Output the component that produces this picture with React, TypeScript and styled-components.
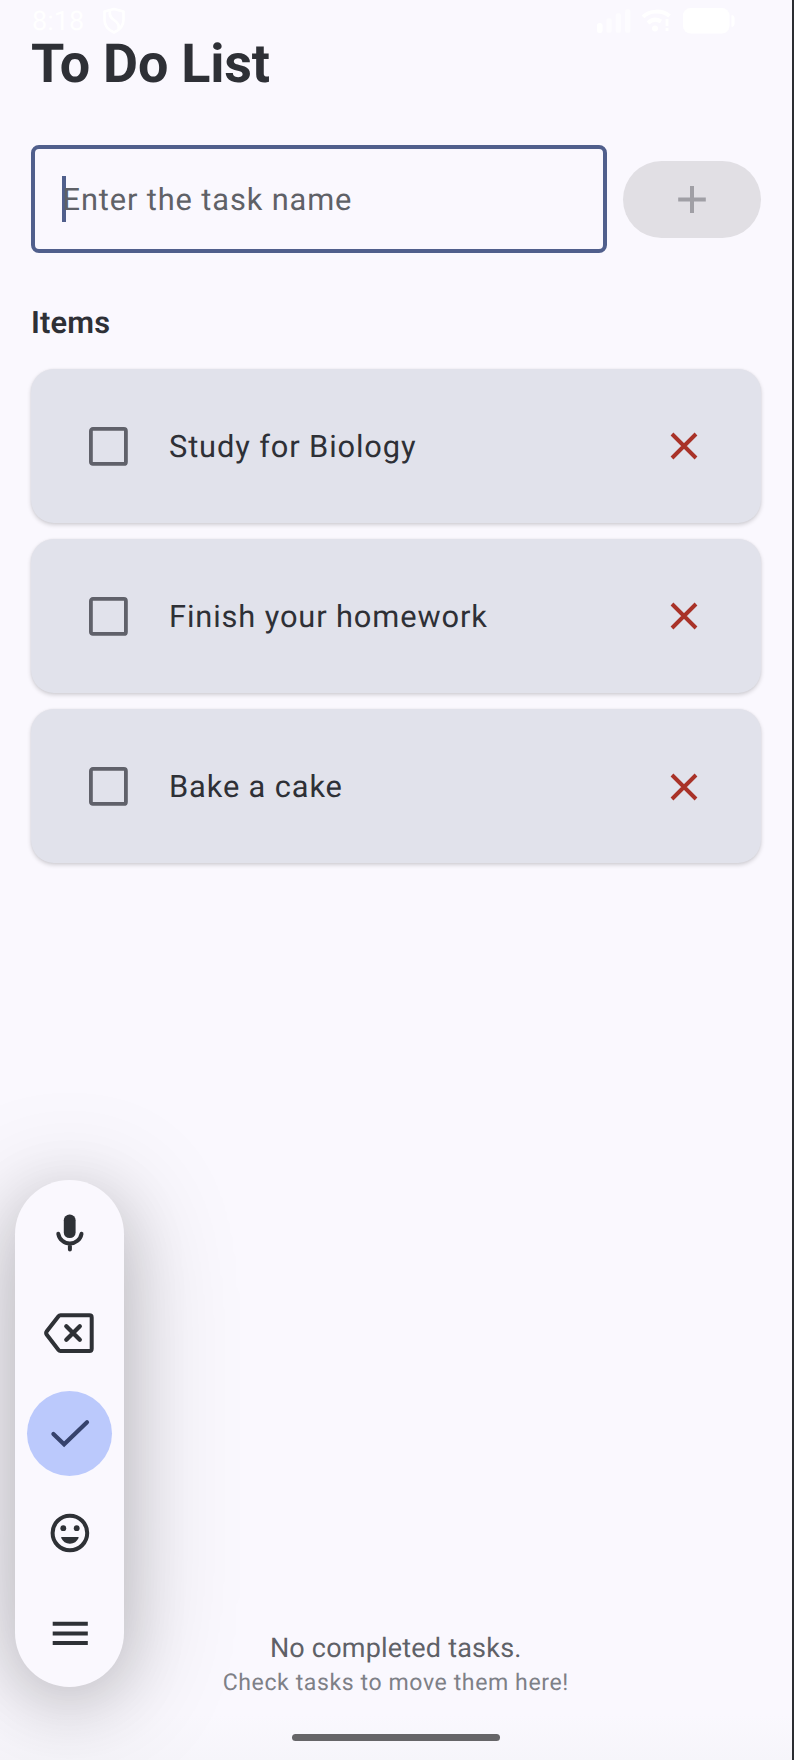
import React from "react";
import styled, { createGlobalStyle } from "styled-components";

const GlobalStyle = createGlobalStyle`
  *, *::before, *::after { box-sizing: border-box; }
  body { margin: 0; background: #faf8fe; text-rendering: geometricPrecision; }
`;

const Screen = styled.main`
  position: relative;
  display: flex;
  flex-direction: column;
  width: 794px;
  height: 1760px;
  padding: 37px 31px 0 30.5px;
  border-right: 2px solid #2b2d32;
  overflow: hidden;
  background: linear-gradient(to bottom, #faf8fe 1715px, #f6f5fa 1760px);
  color: #2e3036;
  font-family: Roboto, "Liberation Sans", sans-serif;
`;

const StatusBar = styled.div`
  position: absolute;
  inset: 0 2px auto 0;
  display: flex;
  justify-content: space-between;
  align-items: center;
  height: 41px;
  padding: 0 55px 0 32px;
  color: #fff;
`;

const StatusGroup = styled.div<{ $gap: number }>`
  display: flex;
  align-items: center;
  gap: ${(p) => p.$gap}px;
`;

const Clock = styled.span`
  font-size: 27px;
  line-height: 28px;
`;

const Title = styled.h1`
  margin: 0;
  padding-left: 0.5px;
  font-size: 53.9px;
  line-height: 56px;
  font-weight: 700;
  letter-spacing: -0.2px;
`;

const EntryRow = styled.form`
  display: flex;
  align-items: center;
  gap: 15.5px;
  margin-top: 52px;
  height: 108px;
`;

const Field = styled.div`
  display: flex;
  align-items: center;
  width: 576.5px;
  height: 108px;
  padding-left: 27px;
  border: 4px solid #505f8c;
  border-radius: 8px;
`;

const Caret = styled.span`
  width: 4px;
  height: 46px;
  margin-right: -3px;
  background: #505f8c;
`;

const Placeholder = styled.span`
  padding-top: 1px;
  font-size: 30.8px;
  line-height: 46px;
  letter-spacing: 0.88px;
  color: #5f6167;
`;

const AddButton = styled.button`
  display: grid;
  place-items: center;
  width: 138.5px;
  height: 77px;
  padding: 0;
  border: 0;
  border-radius: 39px;
  background: #e1dfe4;
  color: #a09fa5;
`;

const SectionTitle = styled.h2`
  margin: 47px 0 0;
  padding-left: 0.5px;
  font-size: 30.8px;
  line-height: 46px;
  font-weight: 600;
  letter-spacing: 0.2px;
`;

const TaskList = styled.ul`
  display: flex;
  flex-direction: column;
  gap: 16.2px;
  margin: 22.5px 0 0;
  padding: 0;
  list-style: none;
`;

const TaskCard = styled.li`
  display: flex;
  align-items: center;
  height: 154.2px;
  padding: 1px 63px 0 58.5px;
  border-radius: 23px;
  background: #e1e2eb;
  box-shadow: 0 2px 4px rgba(0, 0, 0, 0.17), 0 0 2px rgba(0, 0, 0, 0.06);
`;

const Checkbox = styled.span`
  display: grid;
  width: 39px;
  height: 39px;
  margin-right: 41px;
  color: #60616a;
`;

const TaskName = styled.span`
  flex: 1;
  padding-top: 1px;
  font-size: 30.8px;
  line-height: 46px;
  letter-spacing: 0.88px;
`;

const DeleteButton = styled.button`
  display: grid;
  padding: 0;
  border: 0;
  background: none;
  color: #a93228;
`;

const EmptyState = styled.footer`
  display: flex;
  flex-direction: column;
  align-items: center;
  margin-top: auto;
`;

const EmptyTitle = styled.p`
  margin: 0;
  font-size: 27px;
  line-height: 38px;
  letter-spacing: 0.2px;
  color: #5f6167;
`;

const EmptyHint = styled.p`
  margin: 0;
  font-size: 23.1px;
  line-height: 31px;
  letter-spacing: 0.58px;
  color: #7e8087;
`;

const GestureBar = styled.div`
  width: 208px;
  height: 7.5px;
  margin: 36px 0 19px;
  border-radius: 4px;
  background: #666568;
`;

const InputPill = styled.aside`
  position: absolute;
  left: 15.3px;
  top: 1180px;
  display: flex;
  flex-direction: column;
  align-items: center;
  justify-content: center;
  width: 108.6px;
  height: 506.5px;
  border-radius: 54.3px;
  background: #faf8fe;
  box-shadow: 0 12px 120px rgba(0, 0, 0, 0.2), 0 14px 64px rgba(0, 0, 0, 0.16);
`;

const PillSlot = styled.div`
  display: grid;
  place-items: center;
  height: 100.2px;
`;

const PillButton = styled.button<{ $active?: boolean }>`
  display: grid;
  place-items: center;
  width: 85.3px;
  height: 85.3px;
  padding: 0;
  border: 0;
  border-radius: 50%;
  background: ${(p) => (p.$active ? "#bbc9fc" : "transparent")};
  color: ${(p) => (p.$active ? "#36426c" : "#2e3136")};
`;

const Glyph = ({ children }: { children: React.ReactNode }) => (
  <svg width="60" height="60" viewBox="0.5 0 60 60" fill="none" stroke="currentColor" strokeWidth="4" strokeLinejoin="round">
    {children}
  </svg>
);

const ShieldIcon = () => (
  <svg width="24" height="28" viewBox="0 0 24 28" fill="none" stroke="currentColor" strokeWidth="2.600" strokeLinejoin="round">
    <path d="M12 2 21.500 4.500v8.500c0 6-4 10-9.500 12.500C6.500 23 2.500 19 2.500 13V4.500z" />
    <path d="M8 4c-1 4 0 6.500 4 9s5.500 5 4.500 9" />
  </svg>
);

const SignalIcon = () => (
  <svg width="34" height="26" viewBox="0 0 34 26" fill="currentColor">
    <rect x="0" y="15" width="5.500" height="10" rx="2.500" />
    <rect x="9.300" y="10" width="5.500" height="15" rx="2.500" opacity=".5" />
    <rect x="18.600" y="5" width="5.500" height="20" rx="2.500" opacity=".5" />
    <rect x="28" y="1" width="5.500" height="24" rx="2.500" opacity=".5" />
  </svg>
);

const WifiIcon = () => (
  <svg width="30" height="24" viewBox="0 0 30 24" fill="none" stroke="currentColor" strokeWidth="4">
    <path d="M1 8C7.500 1 20.500 1 27.500 7" />
    <path d="M6 14c4-4 9-4 13-1.500" />
    <circle cx="13" cy="19.500" r="3" fill="currentColor" stroke="none" />
    <path d="M25 10v7M25 19v3" strokeWidth="2.800" />
  </svg>
);

const BatteryIcon = () => (
  <svg width="52" height="26" viewBox="0 0 52 26" fill="currentColor">
    <rect width="46.500" height="25.500" rx="7.500" />
    <path d="M48.500 7c2 0 3 1.500 3 3.500v5c0 2-1 3.500-3 3.500z" />
  </svg>
);

const PlusIcon = () => (
  <svg width="28" height="28" viewBox="0 0 28 28" stroke="currentColor">
    <path d="M0.200 14.500H27.800M14 1V28" strokeWidth="4" />
  </svg>
);

const BoxIcon = () => (
  <svg width="39" height="39" viewBox="0 0 39 39" fill="none" stroke="currentColor" strokeWidth="3.800">
    <rect x="1.900" y="1.900" width="35" height="35" rx="2" />
  </svg>
);

const CloseIcon = () => (
  <svg width="28" height="28" viewBox="0 0 28 28" stroke="currentColor" strokeWidth="3.900">
    <path d="M2 2 26 26M26 2 2 26" />
  </svg>
);

const MicIcon = () => (
  <Glyph>
    <rect x="24.300" y="11.600" width="11.800" height="23.500" rx="5.700" fill="currentColor" stroke="none" />
    <path d="M18.800 30.800A11.800 11.800 0 0 0 42 30.800M30.400 41v5.500" strokeLinecap="round" />
  </Glyph>
);

const BackspaceIcon = () => (
  <Glyph>
    <path d="M21 12.200H50Q52.200 12.200 52.200 14.400V45.800Q52.200 48 50 48H21Q19.800 48 19 47L7.300 31.800Q6 30 7.300 28.300L19 13.200Q19.800 12.200 21 12.200Z" />
    <path d="M26.800 23.300 40.300 36.800M40.300 23.300 26.800 36.800" strokeLinecap="round" strokeWidth="4.300" />
  </Glyph>
);

const DoneIcon = () => (
  <Glyph>
    <path d="M13.900 31 24.600 41.300 47.500 19.200" strokeLinecap="round" strokeLinejoin="miter" strokeWidth="4.200" />
  </Glyph>
);

const SmileIcon = () => (
  <Glyph>
    <circle cx="30.400" cy="30" r="17.300" />
    <g fill="currentColor" stroke="none">
      <circle cx="23.800" cy="25.200" r="2.900" />
      <circle cx="37.200" cy="25.200" r="2.900" />
      <path d="M22.500 33.900H38.300Q39.700 33.900 39.100 35C37.500 38.500 34.500 40.700 30.400 40.700S23.300 38.500 21.700 35Q21.100 33.900 22.500 33.900Z" />
    </g>
  </Glyph>
);

const MenuIcon = () => (
  <Glyph>
    <path d="M13.200 19.800H48.300M13.200 29.500H48.300M13.200 39.100H48.300" />
  </Glyph>
);

const tasks = ["Study for Biology", "Finish your homework", "Bake a cake"];

const pillActions = [
  { label: "Voice input", icon: <MicIcon /> },
  { label: "Backspace", icon: <BackspaceIcon /> },
  { label: "Done", icon: <DoneIcon />, active: true },
  { label: "Emoji", icon: <SmileIcon /> },
  { label: "Menu", icon: <MenuIcon /> },
];

export default function App() {
  return (
    <>
      <GlobalStyle />
      <Screen>
        <StatusBar>
          <StatusGroup $gap={18}>
            <Clock>8:18</Clock>
            <ShieldIcon />
          </StatusGroup>
          <StatusGroup $gap={11}>
            <SignalIcon />
            <WifiIcon />
            <BatteryIcon />
          </StatusGroup>
        </StatusBar>
        <Title>To Do List</Title>
        <EntryRow>
          <Field>
            <Caret />
            <Placeholder>Enter the task name</Placeholder>
          </Field>
          <AddButton type="button" aria-label="Add task" disabled>
            <PlusIcon />
          </AddButton>
        </EntryRow>
        <SectionTitle>Items</SectionTitle>
        <TaskList>
          {tasks.map((task) => (
            <TaskCard key={task}>
              <Checkbox role="checkbox" aria-checked={false}>
                <BoxIcon />
              </Checkbox>
              <TaskName>{task}</TaskName>
              <DeleteButton aria-label="Delete">
                <CloseIcon />
              </DeleteButton>
            </TaskCard>
          ))}
        </TaskList>
        <EmptyState>
          <EmptyTitle>No completed tasks.</EmptyTitle>
          <EmptyHint>Check tasks to move them here!</EmptyHint>
          <GestureBar />
        </EmptyState>
        <InputPill>
          {pillActions.map((a) => (
            <PillSlot key={a.label}>
              <PillButton $active={a.active} aria-label={a.label}>
                {a.icon}
              </PillButton>
            </PillSlot>
          ))}
        </InputPill>
      </Screen>
    </>
  );
}
